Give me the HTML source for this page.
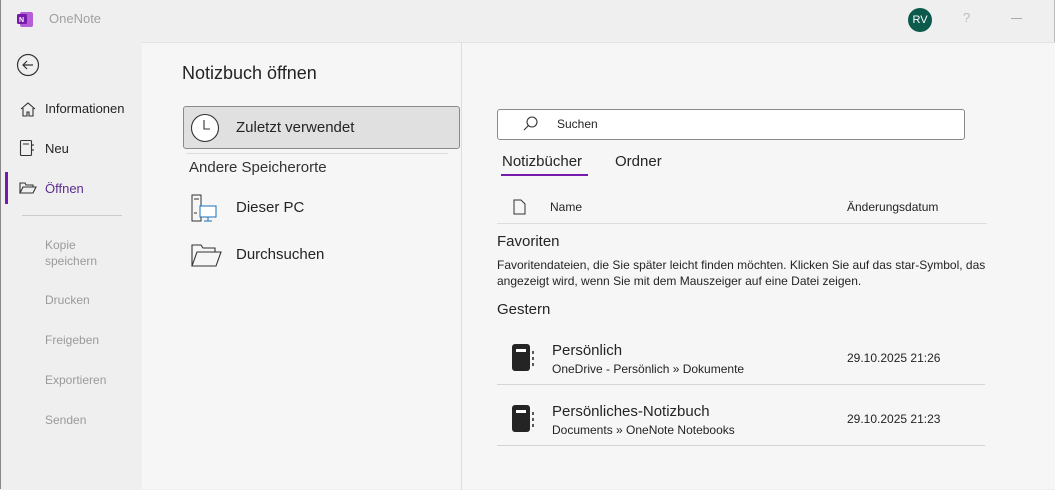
<!DOCTYPE html><html><head><meta charset="utf-8"><style>
*{margin:0;padding:0;box-sizing:border-box}
body{width:1055px;height:489px;overflow:hidden;background:#efefef;font-family:"Segoe UI","Liberation Sans",sans-serif;color:#242424;position:relative;font-size:13px}
.a{position:absolute;white-space:nowrap}
.main{position:absolute;left:142px;top:42px;width:913px;height:447px;background:#f6f6f6;border-top:1px solid #e3e3e3}
.g{color:#9a9a9a;font-size:12px}
</style></head><body>
<div class="a" style="left:0;top:0;width:1px;height:489px;background:#888"></div>
<div class="a" style="left:1054px;top:0;width:1px;height:489px;background:#bbb"></div>
<svg class="a" style="left:17px;top:11px" width="17" height="17"><rect x="3" y="1" width="13" height="15" rx="2" fill="#b45fd6"/><rect x="0" y="3" width="10" height="10" rx="1.5" fill="#7719aa"/><text x="2" y="11" font-size="7" font-weight="bold" fill="#fff" font-family="Liberation Sans">N</text></svg>
<div class="a" style="left:49px;top:11px;color:#a0a0a0;font-size:13px">OneNote</div>
<div class="a" style="left:908px;top:8px;width:24px;height:24px;border-radius:50%;background:#0b5a4c;color:#fff;font-size:11px;text-align:center;line-height:24px">RV</div>
<div class="a" style="left:963px;top:10px;color:#bbb;font-size:13px">?</div>
<div class="a" style="left:1011px;top:18px;width:11px;height:1px;background:#aaa"></div>
<svg class="a" style="left:16px;top:53px" width="24" height="24"><circle cx="12" cy="12" r="10.5" fill="none" stroke="#333" stroke-width="1.2"/><path d="M17 12H7M11 8l-4 4 4 4" fill="none" stroke="#333" stroke-width="1.2"/></svg>
<svg class="a" style="left:19px;top:101px" width="18" height="16"><path d="M2 8L9 2l7 6M4 7v8h4v-4h2v4h4V7" fill="none" stroke="#333" stroke-width="1.1"/></svg>
<div class="a" style="left:45px;top:101px">Informationen</div>
<svg class="a" style="left:19px;top:139px" width="16" height="19"><rect x="1.5" y="1.5" width="11" height="15" rx="1" fill="none" stroke="#333" stroke-width="1.1"/><path d="M4 5h6M14 5v2M14 10v2" stroke="#333" stroke-width="1.1"/></svg>
<div class="a" style="left:45px;top:141px">Neu</div>
<div class="a" style="left:5px;top:172px;width:3px;height:32px;background:#7719aa"></div>
<svg class="a" style="left:19px;top:181px" width="18" height="14"><path d="M1 12V2h5l1 2h7v2M1 12l3-6h13l-3 6z" fill="none" stroke="#333" stroke-width="1.1"/></svg>
<div class="a" style="left:45px;top:181px;color:#5c2e91">Öffnen</div>
<div class="a" style="left:22px;top:215px;width:100px;height:1px;background:#ccc"></div>
<div class="a g" style="left:45px;top:237px;line-height:16px">Kopie<br>speichern</div>
<div class="a g" style="left:45px;top:293px">Drucken</div>
<div class="a g" style="left:45px;top:333px">Freigeben</div>
<div class="a g" style="left:45px;top:373px">Exportieren</div>
<div class="a g" style="left:45px;top:413px">Senden</div>
<div class="main">
<div class="a" style="left:319px;top:0;width:1px;height:447px;background:#ddd"></div>
<div class="a" style="left:40px;top:20px;font-size:18px">Notizbuch öffnen</div>
<div class="a" style="left:41px;top:63px;width:277px;height:43px;background:#e0e0e0;border:1px solid #8a8a8a;border-radius:3px"></div>
<svg class="a" style="left:48px;top:70px" width="30" height="30"><circle cx="15" cy="15" r="13.5" fill="#fff" stroke="#333" stroke-width="1.1"/><path d="M14 7v9h6" fill="none" stroke="#333" stroke-width="1.1"/></svg>
<div class="a" style="left:94px;top:76px;font-size:15px">Zuletzt verwendet</div>
<div class="a" style="left:44px;top:110px;width:262px;height:1px;background:#ddd"></div>
<div class="a" style="left:47px;top:116px;font-size:15px;color:#333">Andere Speicherorte</div>
<svg class="a" style="left:48px;top:150px" width="32" height="32"><path d="M2 2h9v26H2z" fill="none" stroke="#333"/><path d="M4 6h5M4 20h3" stroke="#333"/><rect x="10" y="13" width="16" height="11" fill="#fff" stroke="#1a6fb5"/><path d="M18 24v4M14 28h8" stroke="#1a6fb5"/></svg>
<div class="a" style="left:94px;top:156px;font-size:15px">Dieser PC</div>
<svg class="a" style="left:48px;top:199px" width="32" height="26"><path d="M2 24V3h9l2 3h12v4M2 24l5-14h24l-5 14z" fill="none" stroke="#333" stroke-width="1.1"/></svg>
<div class="a" style="left:94px;top:203px;font-size:15px">Durchsuchen</div>
<div class="a" style="left:355px;top:66px;width:468px;height:31px;background:#fff;border:1px solid #8a8a8a;border-radius:3px"></div>
<svg class="a" style="left:380px;top:72px" width="18" height="18"><circle cx="10" cy="7" r="5" fill="none" stroke="#333" stroke-width="1.1"/><path d="M6.5 10.5L2 15" stroke="#333" stroke-width="1.1"/></svg>
<div class="a" style="left:415px;top:74px;font-size:12px">Suchen</div>
<div class="a" style="left:360px;top:110px;font-size:15px">Notizbücher</div>
<div class="a" style="left:359px;top:131px;width:87px;height:2px;background:#7719aa"></div>
<div class="a" style="left:473px;top:110px;font-size:15px">Ordner</div>
<svg class="a" style="left:371px;top:156px" width="14" height="16"><path d="M1 1h7l4 4v10H1z" fill="none" stroke="#333"/></svg>
<div class="a" style="left:408px;top:157px;font-size:12px">Name</div>
<div class="a" style="left:705px;top:157px;font-size:12px">Änderungsdatum</div>
<div class="a" style="left:355px;top:180px;width:490px;height:1px;background:#ddd"></div>
<div class="a" style="left:355px;top:190px;font-size:15px">Favoriten</div>
<div class="a" style="left:355px;top:214px;font-size:12px;line-height:16px">Favoritendateien, die Sie später leicht finden möchten. Klicken Sie auf das star-Symbol, das<br>angezeigt wird, wenn Sie mit dem Mauszeiger auf eine Datei zeigen.</div>
<div class="a" style="left:355px;top:258px;font-size:15px">Gestern</div>
<svg class="a" style="left:369px;top:300px" width="24" height="30"><rect x="1" y="1" width="18" height="27" rx="3" fill="#242424"/><rect x="5" y="6" width="10" height="3" fill="#fff"/><path d="M22 8v3M22 14v3M22 20v3" stroke="#242424" stroke-width="1.5"/></svg>
<div class="a" style="left:410px;top:299px;font-size:15px">Persönlich</div>
<div class="a" style="left:410px;top:319px;font-size:12px">OneDrive - Persönlich » Dokumente</div>
<div class="a" style="left:705px;top:308px;font-size:12px">29.10.2025 21:26</div>
<div class="a" style="left:355px;top:341px;width:488px;height:1px;background:#d5d5d5"></div>
<svg class="a" style="left:369px;top:361px" width="24" height="30"><rect x="1" y="1" width="18" height="27" rx="3" fill="#242424"/><rect x="5" y="6" width="10" height="3" fill="#fff"/><path d="M22 8v3M22 14v3M22 20v3" stroke="#242424" stroke-width="1.5"/></svg>
<div class="a" style="left:410px;top:360px;font-size:15px">Persönliches-Notizbuch</div>
<div class="a" style="left:410px;top:380px;font-size:12px">Documents » OneNote Notebooks</div>
<div class="a" style="left:705px;top:369px;font-size:12px">29.10.2025 21:23</div>
<div class="a" style="left:355px;top:402px;width:488px;height:1px;background:#d5d5d5"></div>
</div>
</body></html>
